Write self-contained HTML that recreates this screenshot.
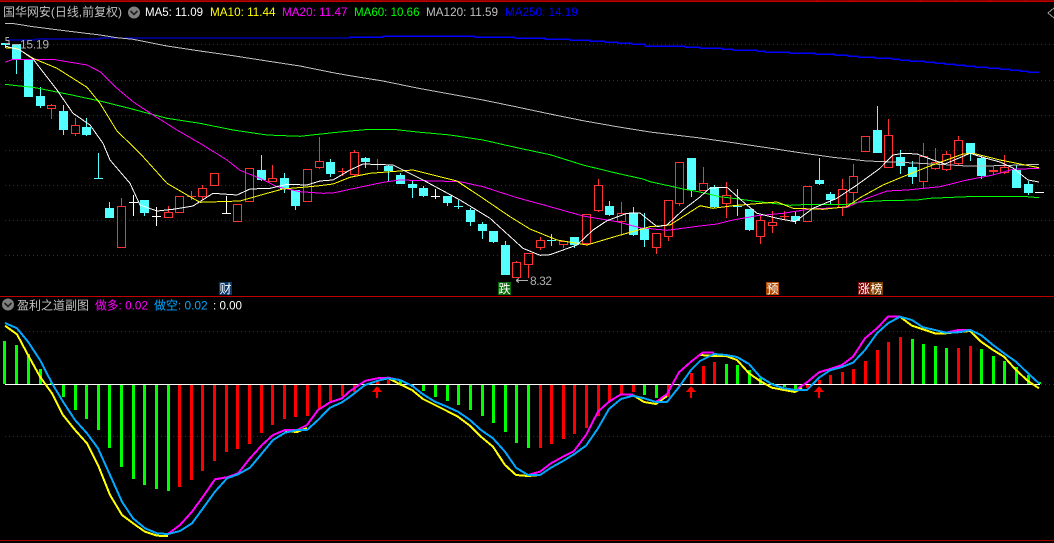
<!DOCTYPE html>
<html><head><meta charset="utf-8"><style>
html,body{margin:0;padding:0;background:#000;overflow:hidden}
svg{display:block;font-family:"Liberation Sans","Noto Sans CJK SC",sans-serif}
</style></head><body>
<svg width="1054" height="543" viewBox="0 0 1054 543" xmlns="http://www.w3.org/2000/svg">
<rect width="1054" height="543" fill="#000"/>
<g shape-rendering="crispEdges">
<path d="M0 1.5H1054M0 296.5H1054" stroke="#c00000" stroke-width="1" fill="none"/>
<path d="M0 0.5H1054" stroke="#900000" fill="none"/>
<path d="M0 540.5H1054" stroke="#a00000" fill="none"/>
<path d="M816.5 0V2M850.5 0V2M885.5 0V2M920.5 0V2M955.5 0V2M990.5 0V2M1025.5 0V2" stroke="#c00000" fill="none"/>
<path d="M5 44.5H1054M5 80.5H1054M5 115.5H1054M5 150.5H1054M5 185.5H1054M5 220.5H1054M5 255.5H1054M5 331.5H1054M5 436.5H1054M1041 384.5H1054" stroke="#a00000" stroke-dasharray="1 3" fill="none"/>
<!-- cyan candles -->
<path fill="#54ffff" d="M1 43h9v2h-9zM12 44h9v15h-9zM24 59h9v38h-9zM36 96h9v10h-9zM59 111h9v19h-9zM82 127h9v8h-9zM94 178h9v1h-9zM105 208h9v10h-9zM140 200h9v13h-9zM257 170h9v10h-9zM280 178h9v11h-9zM291 190h9v16h-9zM326 162h9v12h-9zM361 158h9v4h-9zM384 166h9v5h-9zM396 175h9v9h-9zM408 184h9v4h-9zM419 188h9v8h-9zM443 196h9v7h-9zM454 206h9v1h-9zM466 210h9v12h-9zM478 224h9v7h-9zM489 231h9v11h-9zM501 245h9v30h-9zM547 240h9v1h-9zM570 237h9v8h-9zM605 206h9v9h-9zM629 213h9v22h-9zM640 228h9v12h-9zM687 158h9v32h-9zM710 187h9v20h-9zM733 206h9v1h-9zM745 209h9v21h-9zM791 216h9v5h-9zM815 180h9v4h-9zM826 194h9v6h-9zM873 130h9v23h-9zM896 157h9v9h-9zM908 167h9v10h-9zM966 143h9v10h-9zM977 158h9v18h-9zM1012 170h9v18h-9zM1024 184h9v9h-9z"/>
<path fill="none" stroke="#54ffff" d="M5.5 43V48M16.5 59V74M40.5 87V108M63.5 105V135M86.5 118V136M98.5 153V178M109.5 202V208M144.5 213V216M261.5 155V181M284.5 173V193M295.5 206V210M330.5 159V177M365.5 157V168M388.5 165V181M400.5 173V184M412.5 181V198M423.5 186V197M447.5 203V206M458.5 200V209M470.5 208V226M482.5 222V239M493.5 242V243M505.5 241V245M551.5 234V246M574.5 245V248M609.5 201V216M633.5 207V236M644.5 213V247M691.5 190V197M714.5 185V208M737.5 189V216M749.5 230V231M795.5 212V224M819.5 158V185M830.5 192V204M877.5 106V130M900.5 150V174M912.5 161V184M970.5 153V161M981.5 155V179M1016.5 165V170M1028.5 181V195"/>
<!-- white dojis -->
<path fill="none" stroke="#fff" d="M133.5 195V216M129 202.5H138M156.5 207V226M152 216.5H161M226.5 196V213M222 213.5H231M435.5 189V199M431 196.5H440M1035 192.5H1044"/>
<!-- red candles -->
<path fill="none" stroke="#ff3232" d="M47.5 105.5h8v3h-8zM71.5 125.5h8v8h-8zM117.5 206.5h8v41h-8zM164.5 212.5h8v5h-8zM175.5 196.5h8v16h-8zM198.5 188.5h8v8h-8zM210.5 173.5h8v12h-8zM233.5 204.5h8v17h-8zM245.5 168.5h8v33h-8zM268.5 178.5h8v3h-8zM303.5 169.5h8v32h-8zM315.5 161.5h8v6h-8zM350.5 152.5h8v22h-8zM512.5 262.5h8v15h-8zM524.5 253.5h8v11h-8zM536.5 240.5h8v7h-8zM559.5 241.5h8v3h-8zM582.5 214.5h8v29h-8zM594.5 185.5h8v25h-8zM617.5 213.5h8v8h-8zM652.5 233.5h8v14h-8zM664.5 200.5h8v36h-8zM675.5 162.5h8v41h-8zM699.5 183.5h8v7h-8zM722.5 195.5h8v8h-8zM756.5 220.5h8v16h-8zM768.5 222.5h8v3h-8zM803.5 186.5h8v35h-8zM838.5 189.5h8v18h-8zM849.5 176.5h8v16h-8zM861.5 136.5h8v15h-8zM884.5 135.5h8v32h-8zM919.5 156.5h8v25h-8zM931.5 162.5h8v6h-8zM942.5 154.5h8v15h-8zM954.5 140.5h8v23h-8zM1000.5 167.5h8v5h-8z"/>
<path fill="none" stroke="#ff3232" d="M51.5 104V105M51.5 109V119M75.5 118V125M75.5 134V136M121.5 198V206M168.5 206V212M191.5 191V200M187 196.5H196M202.5 185V188M202.5 197V199M272.5 165V178M319.5 137V161M319.5 168V169M342.5 168V176M338 171.5H347M354.5 150V152M354.5 175V177M377.5 159V170M373 164.5H382M516.5 261V262M528.5 265V278M540.5 237V240M540.5 248V250M563.5 245V248M586.5 244V245M598.5 179V185M598.5 211V212M621.5 202V213M621.5 222V236M656.5 248V254M668.5 237V241M679.5 204V206M703.5 167V183M726.5 182V195M726.5 204V218M760.5 215V220M760.5 237V244M772.5 211V222M772.5 226V233M784.5 211V220M780 216.5H789M842.5 179V189M842.5 208V216M853.5 164V176M853.5 193V205M888.5 119V135M923.5 143V156M923.5 182V188M935.5 148V162M935.5 169V170M946.5 151V154M946.5 170V171M958.5 136V140M958.5 164V165M993.5 166V175M1004.5 155V167M1004.5 173V174"/>
<path fill="#ff3232" d="M989 170h9v2h-9z"/>
<!-- moving averages -->
<g fill="none" stroke-width="1">
<path stroke="#0000ff" stroke-width="1.4" d="M8 40H35V39H100V38H350V37.3H383V36.3H475V37.3H515V38.3H545V39.3H570V40.3H590V41.3H605V42.3H618V43.3H632V44.3H645V46.3H685V47.3H700V48.3H722V49.3H733V50.3H757V51.3H765V52.3H790V53.3H815V54.3H835V55.3H848V56.3H858V57.3H875V58.3H892V59.3H900V60.3H910V61.3H925V62.3H935V63.3H945V64.3H955V65.3H965V66.3H975V67.3H988V68.3H1000V69.3H1010V70.3H1020V71.3H1028V72.3H1039"/>
<path stroke="#c0c0c0" d="M5 23.5L13 23.5L33 26.7L67 31L100 35L117 37.7L133 39.3L167 46L200 51L233 55.7L267 61L300 66L333 72.7L350 75.7L383 81L417 88L450 94L483 100L517 107L550 114L583 120.7L617 126.7L650 132L700 138L733 142.7L767 147.7L800 152.7L833 157.3L867 161L900 162.3L933 164L967 166L1000 165.7L1039 164.3"/>
<path stroke="#00ff00" d="M5 84.3L17 85.7L33 87.3L67 94L100 101L133 109.3L167 118.3L200 123.3L233 130L267 135L300 136.3L333 132.7L350 131L370 129.3L393 129.3L417 132L450 135L483 140L517 147.7L550 154.7L583 165L617 173.3L643 179L650 181.7L670 186L683 189L700 192L720 196.7L733 198.3L753 201L767 202.7L790 205.3L810 204.3L847 204.3L860 202L883 200.7L917 200L930 198.3L953 197.3L977 196.3L1023 196.3L1039 197.7"/>
<path stroke="#ff00ff" d="M5 62.3L13 59.3L53 59.3L67 61.7L87 65L100 71.7L117 88.3L133 101.7L153 115L177 130L200 143.3L227 160L240 170.3L260 178.3L277 186.7L300 191.7L323 193.3L333 193L350 189.3L383 182.3L400 180L460 181.7L483 186.7L517 197.7L550 206.7L583 216L617 221.7L640 227.7L667 230.3L700 226L717 224L733 220L757 215.7L783 213.3L810 209L847 207.3L867 198.3L887 191L907 190L940 186.7L967 180L993 175L1013 169.3L1039 168.3"/>
<path stroke="#ffff00" d="M5 47.7L17 48.3L33 58.3L57 68.3L87 87.3L100 103.3L117 131L140 153.3L167 183.3L190 196.7L200 202.3L240 201L267 193.3L283 189L317 186L333 184L350 177.3L370 173.3L413 170L457 181L483 198.3L510 216.7L530 229L557 240L587 245L617 236L650 226.7L670 225L700 205.7L713 208.3L733 205.7L777 202L793 208.3L823 209.3L847 206.7L860 197.7L883 185L907 175L930 166L963 154L973 153.3L1000 160L1039 167.7"/>
<path stroke="#ffffff" d="M5 46L20 50L33 59L57 90L73 113.3L90 125L103 143.3L110 160L130 183.3L140 205L157 211L173 209.3L193 206L213 193.3L237 195L250 189L270 188.3L287 184.3L307 185L320 181L333 180L350 170L363 164L393 165L423 180L460 200L490 218.3L523 248.3L540 255.3L550 254.7L577 245L593 230L607 220.7L627 213.3L640 213L657 226.7L667 225L683 210L700 197L710 188L727 187.3L743 201.7L757 213.3L777 218.3L795 221.7L813 208.3L837 198.3L857 185L880 168.3L893 155L903 153.3L917 154L933 160L945 164L970 153.3L985 158L1000 162L1013 168L1028 180L1039 182"/>
</g>
<!-- 15.19 / 8.32 pointers -->
<path fill="none" stroke="#b0b0b0" d="M9 37.5H6V40.5H9V43.5H5M12 44.5H19M516 280.5H528M516 280.5l3 -2M516 280.5l3 2"/>
<!-- tags -->
<rect x="219" y="282" width="13" height="13" fill="#0a3868"/>
<rect x="498" y="282" width="13" height="13" fill="#0a6a0a"/>
<rect x="766" y="282" width="13" height="13" fill="#b04800"/>
<rect x="858" y="282" width="12" height="13" fill="#7a0a0a"/>
<rect x="870" y="282" width="13" height="13" fill="#804000"/>
<!-- indicator histogram -->
<path fill="#00ff00" d="M3 341h3v43h-3zM15 345h3v39h-3zM27 354h3v30h-3zM39 369h3v15h-3zM50 383h3v1h-3zM62 384h3v13h-3zM74 384h3v26h-3zM85 384h3v35h-3zM97 384h3v46h-3zM108 384h3v64h-3zM120 384h3v83h-3zM132 384h3v95h-3zM143 384h3v101h-3zM155 384h3v105h-3zM167 384h3v107h-3zM399 381h3v3h-3zM411 384h3v3h-3zM422 384h3v7h-3zM434 384h3v13h-3zM446 384h3v17h-3zM457 384h3v21h-3zM469 384h3v26h-3zM481 384h3v32h-3zM492 384h3v39h-3zM504 384h3v48h-3zM515 384h3v59h-3zM527 384h3v64h-3zM643 384h3v11h-3zM655 384h3v14h-3zM725 364h3v20h-3zM736 365h3v19h-3zM748 370h3v14h-3zM759 378h3v6h-3zM771 383h3v1h-3zM783 384h3v3h-3zM794 384h3v5h-3zM911 339h3v45h-3zM922 344h3v40h-3zM934 346h3v38h-3zM945 348h3v36h-3zM980 349h3v35h-3zM992 356h3v28h-3zM1003 361h3v23h-3zM1015 367h3v17h-3zM1027 375h3v9h-3zM1038 382h3v2h-3z"/>
<path fill="#ff0000" d="M178 384h3v103h-3zM190 384h3v96h-3zM201 384h3v87h-3zM213 384h3v77h-3zM225 384h3v68h-3zM236 384h3v65h-3zM248 384h3v60h-3zM260 384h3v49h-3zM271 384h3v41h-3zM283 384h3v35h-3zM294 384h3v33h-3zM306 384h3v32h-3zM318 384h3v25h-3zM329 384h3v17h-3zM341 384h3v12h-3zM353 384h3v8h-3zM376 381h3v3h-3zM387 380h3v4h-3zM539 384h3v64h-3zM550 384h3v60h-3zM562 384h3v55h-3zM573 384h3v50h-3zM585 384h3v44h-3zM597 384h3v32h-3zM608 384h3v18h-3zM620 384h3v11h-3zM632 384h3v8h-3zM667 384h3v13h-3zM678 384h3v3h-3zM690 373h3v11h-3zM702 366h3v18h-3zM713 362h3v22h-3zM806 384h3v4h-3zM818 380h3v4h-3zM829 375h3v9h-3zM841 372h3v12h-3zM852 369h3v15h-3zM864 361h3v23h-3zM876 350h3v34h-3zM887 342h3v42h-3zM899 337h3v47h-3zM957 348h3v36h-3zM969 346h3v38h-3z"/>
<path d="M5 384.5H1040" stroke="#fff" stroke-width="1.4" fill="none"/>
<!-- red up arrows -->
<path fill="#ff0000" d="M377 386l5 6h-4v6h-2v-6h-4zM691 386l5 6h-4v6h-2v-6h-4zM819 386l5 6h-4v6h-2v-6h-4z"/>
<!-- indicator lines -->
<g fill="none" stroke-width="2">
<path stroke="#ffff00" d="M5 325.7L17 334.3L28 355L40 376.7L52 393.3L63 415L75 430L87 443.3L98 465L110 495L122 515L133 523.3L145 531.7L157 535.7L168 536M285 431L297 432L307 428M388 378L400 384.3L412 390L423 399L435 405L447 411L458 416.7L470 425.7L481 436.7L493 446.7L505 465L516 475L528 476L540 475M633 395L644 402L656 404L667 396M700 355L714 356L726 356L737 360L749 373.3L760 381L772 387.7L784 390L795 392L802 388M900 316.7L912 325.7L923 329.3L935 333.3L946 333.3L970 331L981 341.7L993 350L1004 356.7L1016 370L1028 381L1039 388.3"/>
<path stroke="#ff00ff" d="M168 534L180 525L192 511.7L203 496.7L215 479.3L227 477.3L238 473.3L250 458.3L262 445L273 435L285 430L297 430L307 425L318 410L330 402.3L342 398.3L350 391L365 381L377 378.3L388 377.7L400 380M528 475L540 471.7L551 463.3L563 456.7L574 451L586 435L598 411.7L609 401.7L621 394.3L633 394.3M656 402L667 394L679 372.3L691 361.7L703 352.3L714 352.3M797 389L807 382.3L819 372.3L830 369L842 365L853 356.7L865 338.3L877 328.3L888 316.7L900 316.7M946 332.7L958 330L970 330"/>
<path stroke="#00a8ff" d="M5 323L17 328.3L28 341.7L40 360L52 383.3L63 401.7L75 420L87 433.3L98 448.3L110 475L122 501.7L133 518.3L145 528.3L157 533.3L168 534L180 531L192 523.3L203 508.3L215 491.7L227 478.3L238 474.3L250 467.7L262 453.3L273 440L285 432.7L297 430L307 430L318 420L330 407.7L342 402.3L350 396.7L365 385L377 381L388 378.3L400 380L412 385.7L423 394.3L435 401.7L447 406.7L458 411.7L470 420L481 430L493 438.3L505 451.7L516 467.7L528 475L540 475L551 467.7L563 461L574 454.3L586 445.7L598 428.3L609 409L621 399L633 395.7L644 398.3L656 402L667 402L679 387L691 370L700 361L714 354L726 355L737 357L749 364L760 376.7L772 384.3L784 388.3L795 390L807 390L819 377.7L830 370.3L842 367L853 362.7L865 350L877 333.3L888 323.3L900 316.7L912 320L923 327.3L935 330L946 332.7L958 332.3L970 330L981 335L993 345L1004 353.3L1016 361.7L1028 373.3L1039 383.3"/>
</g>
<!-- icons -->
<path fill="none" stroke="#9a9a9a" d="M1054 8L1048 13L1054 18"/>
</g>
<circle cx="134" cy="12.5" r="6" fill="#808080"/>
<path d="M130.5 11l3.5 3.5 3.5-3.5" fill="none" stroke="#1e1e1e" stroke-width="1.6"/>
<circle cx="8" cy="304.5" r="6" fill="#808080"/>
<path d="M4.5 303l3.5 3.5 3.5-3.5" fill="none" stroke="#1e1e1e" stroke-width="1.6"/>
<!-- text -->
<g font-size="12">
<text x="3" y="16" fill="#c0c0c0" textLength="119" lengthAdjust="spacingAndGlyphs">国华网安(日线,前复权)</text>
<text x="145" y="16" fill="#ffffff" textLength="58" lengthAdjust="spacingAndGlyphs">MA5: 11.09</text>
<text x="210" y="16" fill="#ffff00" textLength="65.5" lengthAdjust="spacingAndGlyphs">MA10: 11.44</text>
<text x="282" y="16" fill="#ff00ff" textLength="65.5" lengthAdjust="spacingAndGlyphs">MA20: 11.47</text>
<text x="354" y="16" fill="#00ff00" textLength="65.5" lengthAdjust="spacingAndGlyphs">MA60: 10.66</text>
<text x="426" y="16" fill="#c0c0c0" textLength="72" lengthAdjust="spacingAndGlyphs">MA120: 11.59</text>
<text x="505" y="16" fill="#0000ff" textLength="72.7" lengthAdjust="spacingAndGlyphs">MA250: 14.19</text>
<text x="20" y="48.5" fill="#b0b0b0" textLength="29" lengthAdjust="spacing">15.19</text>
<text x="530" y="285" fill="#b0b0b0" textLength="22" lengthAdjust="spacing">8.32</text>
<text x="219.5" y="293" fill="#fff">财</text>
<text x="498.5" y="293" fill="#fff">跌</text>
<text x="766.5" y="293" fill="#fff">预</text>
<text x="858" y="293" fill="#fff">涨</text>
<text x="870.5" y="293" fill="#fff">榜</text>
<text x="17" y="309.5" fill="#c0c0c0" textLength="72" lengthAdjust="spacingAndGlyphs">盈利之道副图</text>
<text x="95" y="309.5" fill="#ff00ff" textLength="53" lengthAdjust="spacingAndGlyphs">做多: 0.02</text>
<text x="154" y="309.5" fill="#00a8ff" textLength="53.7" lengthAdjust="spacingAndGlyphs">做空: 0.02</text>
<text x="213" y="309.5" fill="#ffffff" textLength="29" lengthAdjust="spacingAndGlyphs">: 0.00</text>
</g>
</svg>
</body></html>
